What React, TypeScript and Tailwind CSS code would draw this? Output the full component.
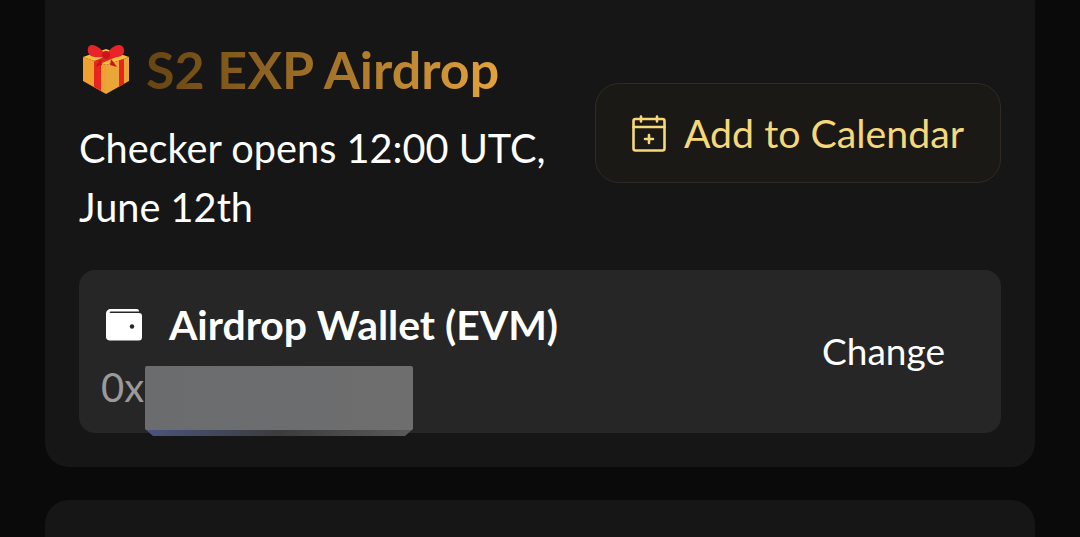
export default function App() {
  return (
    <div className="h-[537px] w-[1080px] overflow-hidden bg-[#0a0a0a] px-[45px] font-['Lato',sans-serif]">
      <div className="mt-[-20px] flex h-[487px] flex-col rounded-[24px] bg-[#161616] px-[34px] pt-[61px]">
        <div className="flex items-start justify-between">
          <div className="w-[500px]">
            <div className="flex items-center gap-[15px]">
              <svg width="49" height="52" viewBox="0 0 49 52" className="ml-[3px] shrink-0">
                <path d="M1 14 L24 22 L24 51 L1 38 Z" fill="#f0a030" />
                <path d="M24 22 L47 14 L47 38 L24 51 Z" fill="#eaa638" />
                <path d="M1 14 L24 6 L47 14 L24 22 Z" fill="#fcbc3e" />
                <path d="M12 18 L19 20.500 L19 48 L12 44 Z" fill="#e8261f" />
                <path d="M37 17.500 L42 16 L42 41 L37 44 Z" fill="#e8261f" />
                <path d="M12 18 L33 10 L39 12 L19 20.500 Z" fill="#d92a20" />
                <path d="M23 11 C14 -1 4 0 6 9 C7 14 14 15 23 14 Z" fill="#e8232a" />
                <path d="M25 11 C32 -1 43 0 42 9 C41 14 34 15 25 14 Z" fill="#e8232a" />
                <path d="M19 16 C15 21 13 24 13 24 L20 22 Z M29 16 C33 21 35 24 35 24 L28 22 Z" fill="#c9151b" />
                <circle cx="24" cy="12" r="4" fill="#c9151b" />
              </svg>
              <span className="bg-gradient-to-r from-[#664512] to-[#e3a23f] bg-clip-text text-[52px] leading-[56px] font-bold text-transparent">
                S2 EXP Airdrop
              </span>
            </div>
            <p className="mt-[21px] w-[480px] text-[39.7px] leading-[59px] text-white">
              Checker opens 12:00 UTC, June 12th
            </p>
          </div>
          <button className="mt-[42px] flex h-[100px] w-[406px] items-center justify-center gap-[18px] rounded-[24px] border border-[#2f2b22] bg-[#1b1915] text-[39.3px] text-[#f5d87a]">
            <svg width="34" height="37" viewBox="0 0 34 37" fill="none" stroke="currentColor" strokeWidth="2.600" strokeLinecap="round" strokeLinejoin="round">
              <rect x="1.500" y="4" width="31" height="31.500" rx="2" />
              <path d="M1.500 12 H32.500 M9 1.500 V6.500 M25 1.500 V6.500 M17 20 V28 M13 24 H21" />
            </svg>
            Add to Calendar
          </button>
        </div>
        <div className="relative mt-[34px] flex h-[163px] items-center justify-between rounded-[16px] bg-[#262626] pl-[27px] pr-[56px]">
          <div className="pt-[9px]">
            <div className="flex items-center gap-[27px]">
              <svg width="36" height="32" viewBox="0 0 36 32" fill="white">
                <path d="M5 0 H31 C32.500 0 33 1 33 2.500 H5 C3 2.500 3 4 5 4 H33 C35 4 36 5 36 7 V28 C36 30.500 35 31.500 33 31.500 H4 C1.500 31.500 0 30 0 28 V5 C0 2 2 0 5 0 Z" />
                <circle cx="26" cy="17.500" r="2.200" fill="#262626" />
              </svg>
              <span className="text-[40.9px] leading-[44px] font-bold text-white">Airdrop Wallet (EVM)</span>
            </div>
            <div className="mt-[18px] ml-[-5px] text-[40px] leading-[44px] text-[#9a9a9a]">0x</div>
          </div>
          <span className="mb-[2px] text-[37px] text-white">Change</span>
          <div className="absolute left-[66px] top-[96px] h-[70px] w-[268px] overflow-hidden rounded-[2px] [clip-path:polygon(0_0,100%_0,100%_90%,97%_100%,3%_100%,0_90%)]">
            <div className="h-[64px] bg-gradient-to-r from-[#6a6c6e] to-[#6e6e6e]" />
            <div className="h-[6px] bg-gradient-to-r from-[#4a5480] via-[#3c3c3c] to-[#5a5a5a]" />
          </div>
        </div>
      </div>
      <div className="mt-[33px] h-[60px] rounded-[24px] bg-[#161616]" />
    </div>
  );
}
